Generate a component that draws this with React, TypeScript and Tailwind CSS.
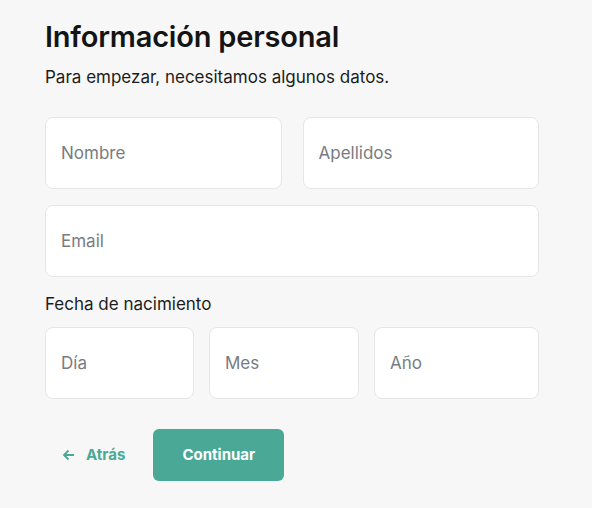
export default function App() {
  return (
    <main
      className="min-h-screen w-full bg-[#f7f7f7] px-[45px] pt-[18px] text-[#1c1c1c]"
      style={{ fontFamily: "Inter, 'Noto Sans', sans-serif" }}
    >
      <h1 className="text-[29px] font-semibold leading-[38px] tracking-[-0.2px] text-[#141414]">
        Información personal
      </h1>
      <p className="mt-[10px] text-[17px] leading-[22px] text-[#1c1c1c]">
        Para empezar, necesitamos algunos datos.
      </p>
      <form className="mt-[29px] w-[494px]">
        <div className="grid grid-cols-2 gap-[21px]">
          <Field placeholder="Nombre" />
          <Field placeholder="Apellidos" />
        </div>
        <div className="mt-[16px]">
          <Field placeholder="Email" />
        </div>
        <label className="mt-[16px] block text-[17px] leading-[22px] text-[#1c1c1c]">
          Fecha de nacimiento
        </label>
        <div className="mt-[12px] grid grid-cols-[149px_150px_1fr] gap-[15px]">
          <Field placeholder="Día" />
          <Field placeholder="Mes" />
          <Field placeholder="Año" />
        </div>
        <div className="mt-[30px] flex items-center">
          <button
            type="button"
            className="flex items-center gap-[11px] pl-[17px] pr-[28px] text-[15px] font-bold text-[#4aa994]"
          >
            <svg width="13" height="12" viewBox="0 0 13 12" fill="none" stroke="currentColor" strokeWidth="1.8">
              <path d="M12 6H2M6.5 1.5 2 6l4.5 4.5" />
            </svg>
            Atrás
          </button>
          <button
            type="button"
            className="h-[52px] w-[131px] rounded-[6px] bg-[#4aa996] text-[15px] font-bold text-white"
          >
            Continuar
          </button>
        </div>
      </form>
    </main>
  );
}

function Field({ placeholder }: { placeholder: string }) {
  return (
    <input
      type="text"
      placeholder={placeholder}
      className="block h-[72px] w-full rounded-[8px] border border-[#e6e6e6] bg-white px-[15px] text-[17px] text-[#1c1c1c] outline-none placeholder:text-[#787c82]"
    />
  );
}
